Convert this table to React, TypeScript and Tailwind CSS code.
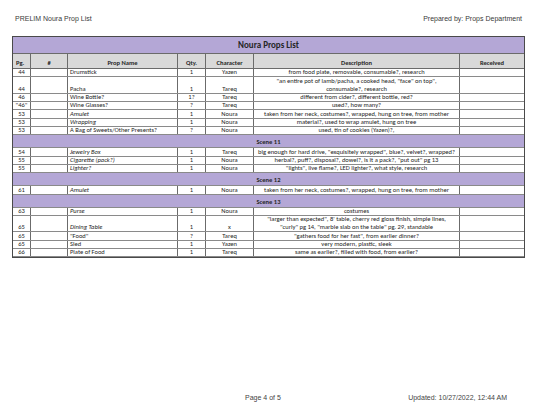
type Prop = {
  pg: string;
  name: string;
  italic?: boolean;
  qty: string;
  character: string;
  desc: string[];
};

type Section = { scene?: string; rows: Prop[] };

const sections: Section[] = [
  {
    rows: [
      { pg: "44", name: "Drumstick", qty: "1", character: "Yazen", desc: ["from food plate, removable, consumable?, research"] },
      {
        pg: "44",
        name: "Pacha",
        qty: "1",
        character: "Tareq",
        desc: ["\"an entire pot of lamb/pacha, a cooked head, \"face\"  on top\",", "consumable?, research"],
      },
      { pg: "46", name: "Wine Bottle?", qty: "1?", character: "Tareq", desc: ["different from cider?, different bottle, red?"] },
      { pg: "\"46\"", name: "Wine Glasses?", qty: "?", character: "Tareq", desc: ["used?, how many?"] },
      { pg: "53", name: "Amulet", italic: true, qty: "1", character: "Noura", desc: ["taken from her neck, costumes?, wrapped, hung on tree, from mother"] },
      { pg: "53", name: "Wrapping", italic: true, qty: "1", character: "Noura", desc: ["material?, used to wrap amulet, hung on tree"] },
      { pg: "53", name: "A Bag of Sweets/Other Presents?", qty: "?", character: "Noura", desc: ["used, tin of cookies (Yazen)?,"] },
    ],
  },
  {
    scene: "Scene 11",
    rows: [
      { pg: "54", name: "Jewelry Box", italic: true, qty: "1", character: "Tareq", desc: ["big enough for hard drive, \"exquisitely wrapped\", blue?, velvet?, wrapped?"] },
      { pg: "55", name: "Cigarette (pack?)", italic: true, qty: "1", character: "Noura", desc: ["herbal?, puff?, disposal?, dowel?, is it a pack?, \"put out\" pg 13"] },
      { pg: "55", name: "Lighter?", italic: true, qty: "1", character: "Noura", desc: ["\"lights\", live flame?, LED lighter?, what style, research"] },
    ],
  },
  {
    scene: "Scene 12",
    rows: [
      { pg: "61", name: "Amulet", italic: true, qty: "1", character: "Noura", desc: ["taken from her neck, costumes?, wrapped, hung on tree, from mother"] },
    ],
  },
  {
    scene: "Scene 13",
    rows: [
      { pg: "63", name: "Purse", italic: true, qty: "1", character: "Noura", desc: ["costumes"] },
      {
        pg: "65",
        name: "Dining Table",
        italic: true,
        qty: "1",
        character: "x",
        desc: ["\"larger than expected\", 8' table, cherry red gloss finish, simple lines,", "\"curly\" pg 14, \"marble slab on the table\" pg. 29, standable"],
      },
      { pg: "65", name: "\"Food\"", qty: "?", character: "Tareq", desc: ["\"gathers food for her fast\", from earlier dinner?"] },
      { pg: "65", name: "Sled", qty: "1", character: "Yazen", desc: ["very modern, plastic, sleek"] },
      { pg: "66", name: "Plate of Food", qty: "1", character: "Tareq", desc: ["same as earlier?, filled with food, from earlier?"] },
    ],
  },
];

const cols = "grid grid-cols-[18px_37px_110px_28px_48px_206px_1fr]";
const cellBase = "border-r border-[#6b6b6b] overflow-hidden whitespace-nowrap";
const cell = `flex items-end ${cellBase}`;

function PropRow({ row }: { row: Prop }) {
  const tall = row.desc.length > 1;
  return (
    <div className={`${cols} border-b border-[#8a8a8a] ${tall ? "h-[16.6px]" : "h-[8.3px]"}`}>
      <div className={`${cell} justify-center`}>{row.pg}</div>
      <div className={cell}></div>
      <div className={`${cell} pl-[2px] ${row.italic ? "italic" : ""}`}>{row.name}</div>
      <div className={`${cell} justify-center`}>{row.qty}</div>
      <div className={`${cell} justify-center`}>{row.character}</div>
      <div className={`flex flex-col items-center justify-end ${cellBase}`}>
        {row.desc.map((line, i) => (
          <span key={i}>{line}</span>
        ))}
      </div>
      <div></div>
    </div>
  );
}

function SceneBar({ label }: { label: string }) {
  return (
    <div className="flex h-[13px] items-end justify-center border-b border-[#8a8a8a] bg-[#b4a7d6] pb-[1px] font-bold">
      {label}
    </div>
  );
}

export default function App() {
  return (
    <div className="flex h-[414px] w-[537px] flex-col bg-white font-['Liberation_Sans',Arial,sans-serif] text-[#3a3a3a]">
      <div className="flex items-center justify-between pl-[15px] pr-[15px] pt-[15px] text-[7px] leading-[8px]">
        <span>PRELIM Noura Prop List</span>
        <span>Prepared by: Props Department</span>
      </div>

      <div className="mx-[12px] mt-[13px] border border-[#4a4a4a] font-['Carlito','Lato',sans-serif] text-[6.5px] leading-[8px] text-[#262626]">
        <div className="flex h-[17px] items-center justify-center border-b border-[#6b6b6b] bg-[#b4a7d6] text-[9px] font-bold">
          Noura Props List
        </div>
        <div className={`${cols} h-[15px] border-b border-[#6b6b6b] bg-[#d9d9d9] font-bold`}>
          <div className={`${cell} pl-[3px] pb-[1px]`}>Pg.</div>
          <div className={`${cell} justify-center pb-[1px]`}>#</div>
          <div className={`${cell} justify-center pb-[1px]`}>Prop Name</div>
          <div className={`${cell} justify-center pb-[1px]`}>Qty.</div>
          <div className={`${cell} justify-center pb-[1px]`}>Character</div>
          <div className={`${cell} justify-center pb-[1px]`}>Description</div>
          <div className="flex items-end justify-center pb-[1px]">Received</div>
        </div>
        {sections.map((section, si) => (
          <div key={si}>
            {section.scene && <SceneBar label={section.scene} />}
            {section.rows.map((row, ri) => (
              <PropRow key={ri} row={row} />
            ))}
          </div>
        ))}
      </div>

      <div className="mt-auto flex pb-[12px] text-[7px] leading-[8px] text-[#444]">
        <span className="w-[245px]"></span>
        <span>Page 4 of 5</span>
        <span className="ml-auto pr-[30px]">Updated: 10/27/2022, 12:44 AM</span>
      </div>
    </div>
  );
}
